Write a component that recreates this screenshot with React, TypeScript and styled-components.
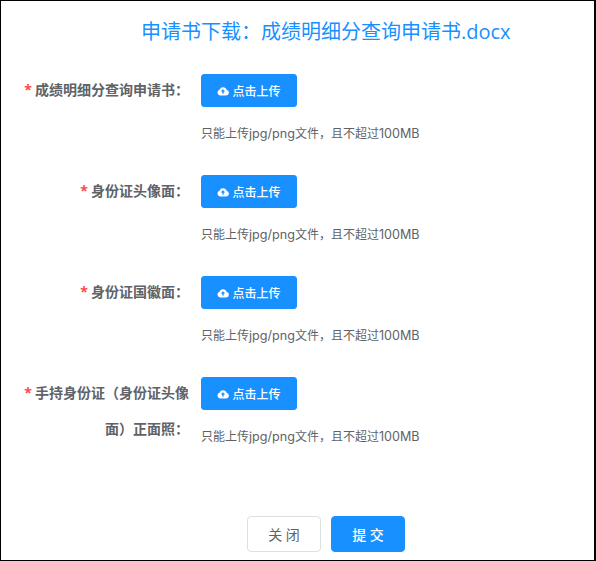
import React, {FC} from 'react';
import styled, {createGlobalStyle} from 'styled-components';

const GlobalStyle = createGlobalStyle`
  html, body {
    margin: 0;
    padding: 0;
    background: #FFFFFF;
  }
  body {
    font-family: "Open Sans", "Noto Sans CJK SC", sans-serif;
  }
`;

const rows = [
    '成绩明细分查询申请书：',
    '身份证头像面：',
    '身份证国徽面：',
    '手持身份证（身份证头像面）正面照：',
];

const CloudIcon: FC = (): JSX.Element => (
    <svg width="12" height="12" viewBox="0 0 24 24" fill="#FFFFFF">
        <path d="M19.3 10.1A7.5 7.5 0 0 0 12 4.5a7.5 7.5 0 0 0-7 4.9A6 6 0 0 0 6 21h12.5a5.5 5.5 0 0 0 .8-10.9zM13.5 13v4h-3v-4H7.5L12 8.5l4.5 4.5h-3z"/>
    </svg>
);

const UploadRow: FC<{label: string}> = ({label}): JSX.Element => (
    <Row>
        <Label>{label}</Label>
        <Content>
            <UploadButton>
                <CloudIcon/>
                点击上传
            </UploadButton>
            <Tip>只能上传<Latin>jpg/png</Latin>文件，且不超过<Latin>100MB</Latin></Tip>
        </Content>
    </Row>
);

const App: FC = (): JSX.Element => (
    <>
        <GlobalStyle/>
        <Page>
            <Title>申请书下载：成绩明细分查询申请书.docx</Title>
            <Form>
                {rows.map((label) => <UploadRow key={label} label={label}/>)}
            </Form>
            <Footer>
                <CloseButton>关 闭</CloseButton>
                <SubmitButton>提 交</SubmitButton>
            </Footer>
        </Page>
    </>
);

export default App;

const Page = styled.div`
  box-sizing: border-box;
  width: 596px;
  height: 561px;
  border: 1px solid #000000;
  border-right-width: 2px;
  display: flex;
  flex-direction: column;
  overflow: hidden;
`;

const Title = styled.div`
  height: 30px;
  margin-top: 16px;
  padding-left: 140px;
  color: #1890FF;
  font-size: 20px;
  line-height: 30px;
`;

const Form = styled.div`
  margin-top: 27px;
  display: flex;
  flex-direction: column;
`;

const Row = styled.div`
  display: flex;
  height: 101px;
`;

const Label = styled.label`
  box-sizing: border-box;
  width: 200px;
  margin-top: -2px;
  padding: 0 12px 0 20px;
  color: #606266;
  font-size: 14px;
  font-weight: 700;
  line-height: 36px;
  text-align: right;

  &::before {
    content: '*';
    margin-right: 3px;
    color: #FF4949;
  }
`;

const Content = styled.div`
  display: flex;
  flex-direction: column;
  align-items: flex-start;
`;

const UploadButton = styled.button`
  box-sizing: border-box;
  width: 96px;
  height: 33px;
  padding: 0;
  display: flex;
  align-items: center;
  justify-content: center;
  gap: 3px;
  background: #1890FF;
  border: 1px solid #1890FF;
  border-radius: 3px;
  color: #FFFFFF;
  font-family: inherit;
  font-size: 12px;
  font-weight: 500;
`;

const Tip = styled.div`
  margin-top: 18px;
  color: #606266;
  font-family: Inter, "Noto Sans CJK SC", sans-serif;
  font-size: 12px;
  line-height: 18px;
`;

const Latin = styled.span`
  font-size: 12.6px;
`;

const Footer = styled.div`
  margin-top: 38px;
  padding-left: 246px;
  display: flex;
  gap: 10px;
`;

const CloseButton = styled.button`
  box-sizing: border-box;
  width: 74px;
  height: 36px;
  padding: 0;
  background: #FFFFFF;
  border: 1px solid #DCDFE6;
  border-radius: 4px;
  color: #606266;
  font-family: inherit;
  font-size: 14px;
`;

const SubmitButton = styled(CloseButton)`
  background: #1890FF;
  border-color: #1890FF;
  color: #FFFFFF;
  font-weight: 500;
`;
